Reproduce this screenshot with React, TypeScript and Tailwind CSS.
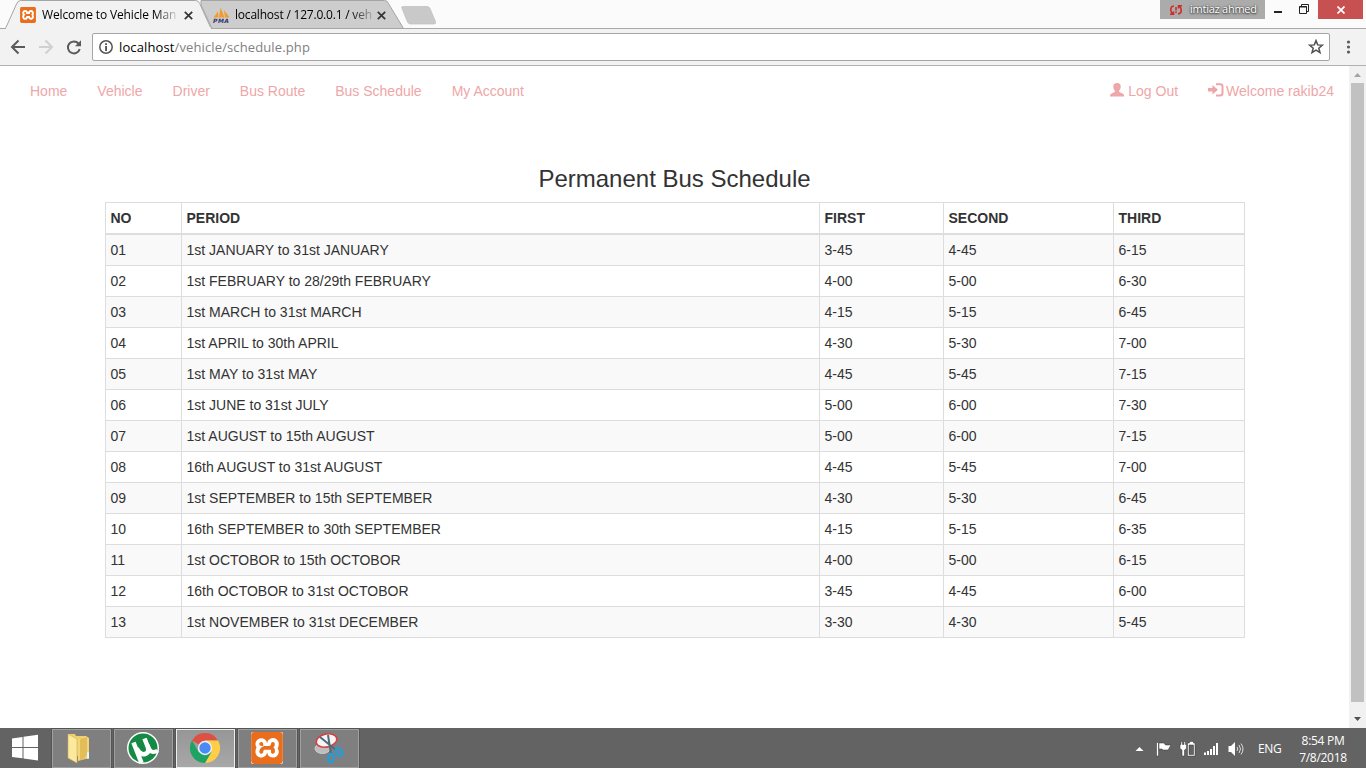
import React from "react";
import { SiXampp } from "react-icons/si";

const rows: string[][] = [
  ["01", "1st JANUARY to 31st JANUARY", "3-45", "4-45", "6-15"],
  ["02", "1st FEBRUARY to 28/29th FEBRUARY", "4-00", "5-00", "6-30"],
  ["03", "1st MARCH to 31st MARCH", "4-15", "5-15", "6-45"],
  ["04", "1st APRIL to 30th APRIL", "4-30", "5-30", "7-00"],
  ["05", "1st MAY to 31st MAY", "4-45", "5-45", "7-15"],
  ["06", "1st JUNE to 31st JULY", "5-00", "6-00", "7-30"],
  ["07", "1st AUGUST to 15th AUGUST", "5-00", "6-00", "7-15"],
  ["08", "16th AUGUST to 31st AUGUST", "4-45", "5-45", "7-00"],
  ["09", "1st SEPTEMBER to 15th SEPTEMBER", "4-30", "5-30", "6-45"],
  ["10", "16th SEPTEMBER to 30th SEPTEMBER", "4-15", "5-15", "6-35"],
  ["11", "1st OCTOBOR to 15th OCTOBOR", "4-00", "5-00", "6-15"],
  ["12", "16th OCTOBOR to 31st OCTOBOR", "3-45", "4-45", "6-00"],
  ["13", "1st NOVEMBER to 31st DECEMBER", "3-30", "4-30", "5-45"],
];

function XamppIcon({ className }: { className: string }) {
  return (
    <span className={"flex shrink-0 rounded-[2px] bg-white " + className}>
      <SiXampp className="size-full text-[#ea6d1c]" />
    </span>
  );
}

function TabClose() {
  return (
    <svg viewBox="0 0 9 9" className="size-[9px] shrink-0" stroke="#333" strokeWidth="1.700">
      <path d="M.8.8l7.400 7.400M8.200.8L.8 8.200" />
    </svg>
  );
}

function TabStrip() {
  return (
    <div className="relative flex h-7 bg-[#fbfbfb] font-['Open_Sans',sans-serif] text-[12px] text-black">
      <svg className="absolute top-0 left-0 h-[29px] w-[450px]" viewBox="0 0 450 29">
        <path d="M0 28.500H450" stroke="#a9a9a9" />
        <path d="M201 .5H384.500q3 0 4 3L403.500 28.500H212L201 5z" fill="#cdcdcd" stroke="#a5a5a5" />
        <path d="M402 8.500q-1-2 1-2h24q2 0 3 2l5.500 13q1 2.500-2 2.500h-23q-2 0-3-2z" fill="#c9c9c9" stroke="#bdbdbd" strokeWidth=".7" />
        <path d="M0 28.500H5.500L16.500 4q1.500-3.500 4-3.500H195.500q3 0 4.200 3L211 28.500" fill="#f2f2f2" stroke="#a5a5a5" />
        <path d="M6 28.500H211" stroke="#f2f2f2" strokeWidth="2" />
      </svg>
      <div className="relative flex w-[205px] items-center pt-[2px] pl-5">
        <XamppIcon className="size-4" />
        <div className="ml-[6px] w-[135px] overflow-hidden tracking-[-0.13px] whitespace-nowrap [mask-image:linear-gradient(to_right,black_84%,transparent_102%)]">Welcome to Vehicle Man</div>
        <div className="ml-[7px] flex"><TabClose /></div>
      </div>
      <div className="relative flex w-[200px] items-center pt-[2px] pl-2">
        <svg viewBox="0 0 17 17" className="h-[17px] w-[17px] shrink-0">
          <path d="M.5 10.500L5 4.500l.5 6zM6 10.500L7.500.5l4 10zM12 10.500L11 3l5.500 7.500z" fill="#f39b28" />
          <text x="0" y="16" fontSize="6" fontWeight="bold" fontStyle="italic" fill="#34346b" textLength="16" fontFamily="DejaVu Sans">PMA</text>
        </svg>
        <div className="ml-[5px] w-[137px] overflow-hidden tracking-[-0.2px] whitespace-nowrap [mask-image:linear-gradient(to_right,black_84%,transparent_104%)]">localhost / 127.0.0.1 / veh</div>
        <div className="ml-[5px] flex"><TabClose /></div>
      </div>
      <div className="relative ml-auto flex h-[19px]">
        <div className="flex h-[19px] w-[105px] items-center bg-[#ababab] pl-[9px] font-['Open_Sans',sans-serif] text-[11px] whitespace-nowrap text-white">
          <svg viewBox="0 0 14 12" className="mr-[7px] h-3 w-[14px] shrink-0" fill="none" stroke="#cf2d28" strokeWidth="1.600">
            <path d="M5 2Q1.500 2.500 1.800 6q.2 2.500 2 3.800M1 10.200h3.500V7.500M9 10Q12.500 9.500 12.200 6q-.2-2.500-2-3.800M13 1.800H9.500V4.500M7 3v3.500M7 7.500v1.500" />
          </svg>
          <span className="tracking-[-0.25px] [text-shadow:0_0_2px_#333,0_1px_2px_#333]">imtiaz ahmed</span>
        </div>
        <svg viewBox="0 0 53 19" className="h-[19px] w-[53px]" fill="none" stroke="#222">
          <path d="M9 12h8" strokeWidth="2" />
          <path d="M34.500 6.500h7v7h-7zM34 7h8M36.500 6V4.500h7v7H42" />
        </svg>
        <div className="mr-[3px] flex h-[19px] w-[45px] items-center justify-center bg-[#c75050]">
          <svg viewBox="0 0 8 8" className="size-2" stroke="#fff" strokeWidth="1.700"><path d="M.5.5l7 7m0-7l-7 7" /></svg>
        </div>
      </div>
    </div>
  );
}

function Toolbar() {
  return (
    <div className="flex h-[38px] items-center border-t border-b border-t-[#a9a9a9] border-b-[#b1b1b1] bg-[#f2f2f2]">
      <svg viewBox="0 0 92 36" className="h-9 w-[92px] shrink-0" fill="none" strokeWidth="2">
        <path d="M25 18H12.500M18.500 11.500L12 18l6.500 6.500" stroke="#5a5a5a" />
        <path d="M39 18H51.500M45.500 11.500L52 18l-6.500 6.500" stroke="#d0d0d0" />
        <path d="M78.500 14.500A6 6 0 1 0 79.700 20" stroke="#5a5a5a" />
        <path d="M81 11.200v6h-6z" fill="#5a5a5a" />
      </svg>
      <div className="flex h-7 w-[1238px] items-center rounded-[2px] border border-[#a5a5a5] bg-white pl-[6px]">
        <svg viewBox="0 0 14 14" className="size-[14px]"><circle cx="7" cy="7" r="6.200" fill="none" stroke="#555" strokeWidth="1.500" /><path d="M6.200 6h1.700v5H6.200zM6.200 3.200h1.700v1.700H6.200z" fill="#444" /></svg>
        <div className="ml-[6px] font-['Open_Sans',sans-serif] text-[13px] leading-6 tracking-[0.12px] text-[#808080]"><span className="text-black">localhost</span>/vehicle/schedule.php</div>
        <svg viewBox="0 0 16 16" className="mr-[5px] ml-auto size-4" fill="none" stroke="#505050" strokeWidth="1.500"><path d="M8 1.600l1.700 4.300 4.700.3-3.600 3 1.200 4.500L8 11.200l-4 2.500 1.200-4.500-3.600-3 4.700-.3z" /></svg>
      </div>
      <svg viewBox="0 0 36 36" className="h-9 w-9" fill="#5a5a5a"><circle cx="18.500" cy="13" r="1.600" /><circle cx="18.500" cy="18" r="1.600" /><circle cx="18.500" cy="23" r="1.600" /></svg>
    </div>
  );
}

function Page() {
  return (
    <main className="w-[1349px] font-['Liberation_Sans',sans-serif] text-[14px] leading-5 text-[#333]">
      <nav className="flex h-[50px] items-center pr-[15px] pl-[15px] text-[#eea6a8]">
        {["Home", "Vehicle", "Driver", "Bus Route", "Bus Schedule", "My Account"].map((t) => (
          <a key={t} className="px-[15px]">{t}</a>
        ))}
        <a className="ml-auto flex items-center px-[15px]">
          <svg viewBox="0 0 14 14" className="mr-1 mb-[2px] size-[14px]" fill="#eea6a8"><path d="M7 0C9.800 0 10.900 1.600 10.700 4c-.1 1.700-.8 3-1.600 3.700v1.100c.5.8 4.100 1.500 4.700 2.700.3.500.3 1.500.3 2H0c0-.5 0-1.500.3-2 .6-1.200 4.100-1.900 4.600-2.700V7.700C4.100 7 3.400 5.700 3.300 4 3.100 1.600 4.200 0 7 0z" /></svg>
          Log Out
        </a>
        <a className="flex items-center pl-[15px]">
          <svg viewBox="0 0 16 14" className="mr-[2px] mb-[2px] h-[14px] w-4" fill="#eea6a8"><path d="M0 5h4.500V2L10 6.800 4.500 11.500v-3H0z" /><path d="M8 1.300h4q2.500 0 2.500 2.200v6.800q0 2.200-2.500 2.200H8" fill="none" stroke="#eea6a8" strokeWidth="2" /></svg>
          Welcome rakib24
        </a>
      </nav>
      <h3 className="mt-[50px] text-center text-[24px] leading-[26px]">Permanent Bus Schedule</h3>
      <table className="mx-auto mt-[10px] w-[1140px] table-fixed border-collapse border border-[#ddd]">
        <colgroup><col className="w-[76px]" /><col className="w-[638px]" /><col className="w-[124px]" /><col className="w-[170px]" /><col /></colgroup>
        <thead>
          <tr>{["NO", "PERIOD", "FIRST", "SECOND", "THIRD"].map((h) => <th key={h} className="border border-b-2 border-[#ddd] p-[5px] text-left font-bold">{h}</th>)}</tr>
        </thead>
        <tbody>
          {rows.map((r) => (
            <tr key={r[0]} className="odd:bg-[#f9f9f9]">{r.map((c, i) => <td key={i} className="border border-[#ddd] p-[5px]">{c}</td>)}</tr>
          ))}
        </tbody>
      </table>
    </main>
  );
}

function Scrollbar() {
  return (
    <div className="flex w-[17px] flex-col items-center bg-[#f1f1f1]">
      <svg viewBox="0 0 17 17" className="size-[17px]"><path d="M5 11l3.500-4 3.500 4z" fill="#a3a3a3" /></svg>
      <div className="w-[13px] flex-1 bg-[#c1c1c1]" />
      <svg viewBox="0 0 17 26" className="h-[26px] w-[17px]"><path d="M5 15h7l-3.500 4z" fill="#505050" /></svg>
    </div>
  );
}

function ChromeIcon() {
  return (
    <svg viewBox="0 0 30 30" className="size-[30px]">
      <path d="M15 15L2 7.500A15 15 0 0 1 28 7.500H15z" fill="#dd5144" />
      <path d="M15 7.500h13A15 15 0 0 1 15 30l6.500-11.250z" fill="#ffcd46" />
      <path d="M2 7.500A15 15 0 0 0 15 30l6.500-11.250H8.500z" fill="#1da362" />
      <circle cx="15" cy="15" r="7.200" fill="#f1f1f1" />
      <circle cx="15" cy="15" r="5.700" fill="#4a8af4" />
    </svg>
  );
}

function Task({ active = false, children }: { active?: boolean; children: React.ReactNode }) {
  return (
    <div className={"flex h-[39px] w-[59px] items-center justify-center border pr-[2px] pb-px shadow-[0_0_0_1px_#555] " + (active ? "border-[#ededed] bg-linear-to-b from-[#969696] to-[#a8a8a8]" : "border-[#a0a0a0] bg-[#7f7f7f]")}>
      {children}
    </div>
  );
}

function Taskbar() {
  return (
    <footer className="flex h-10 bg-[#636363] text-white">
      <svg viewBox="0 0 52 40" className="h-10 w-[52px]" fill="#fff"><path d="M12 10.400l10.500-1.500V19H12zM23.500 8.700L38 6.800V19H23.500zM12 20h10.500v10.300L12 28.900zM23.500 20H38v12.600l-14.500-2z" /></svg>
      <div className="mt-px flex gap-[3px]">
        <Task>
          <svg viewBox="0 0 26 32" className="mr-[6px] h-8 w-[26px]">
            <path d="M3 2h7l1 2h10v20H3z" fill="#eecf72" />
            <path d="M3 2l9 5v24l-9-5z" fill="#fbe99e" stroke="#d5b04d" strokeWidth=".6" />
            <path d="M13 7l8-3 3 2v20l-11 3z" fill="#f3d67b" />
            <path d="M15 7l7-2v18l-4 5h-3z" fill="#e3bd57" />
            <rect x="22" y="20" width="2" height="7" rx="1" fill="#e8f6ff" />
          </svg>
        </Task>
        <Task>
          <svg viewBox="0 0 32 32" className="size-8">
            <circle cx="16" cy="16" r="16" fill="#fff" />
            <circle cx="16" cy="16" r="14.500" fill="#158a45" />
            <g fill="none" stroke="#fff" strokeWidth="4.600"><path d="M6.500 10.500L14.500 31" /><path d="M9.500 16.500q4 7 8.500 5.500t3-6.500L17.500 6.500" /><path d="M20.500 13q2.500 7 5.500 7t4.500-1.500" strokeWidth="4" /></g>
          </svg>
        </Task>
        <Task active><ChromeIcon /></Task>
        <Task><XamppIcon className="size-8" /></Task>
        <Task>
          <svg viewBox="0 0 30 32" className="h-8 w-[30px]">
            <ellipse cx="8.500" cy="16.500" rx="7.500" ry="5" fill="#bdbdbd" stroke="#d0d0d0" />
            <ellipse cx="12.500" cy="8.500" rx="10.500" ry="6.500" fill="#f5f5f5" stroke="#d54242" strokeWidth="1.600" transform="rotate(-12 12.500 8.500)" />
            <path d="M6 5l16 13M14 3l3 19" stroke="#526b79" strokeWidth="2" />
            <g fill="none" stroke="#299bd4" strokeWidth="2.600"><ellipse cx="17" cy="26" rx="2.700" ry="4" transform="rotate(15 17 26)" /><ellipse cx="25" cy="20" rx="2.700" ry="4.200" transform="rotate(-30 25 20)" /></g>
          </svg>
        </Task>
      </div>
      <svg viewBox="0 0 120 40" className="ml-auto h-10 w-[120px]" fill="#fff">
        <path d="M8.500 23l4-4 4 4z" />
        <path d="M29.500 14.500h2V28h-2zM32 15h5l1.500 2H44l-3 5h-5l-1-1h-3z" stroke="#333" strokeWidth=".5" />
        <path d="M54 13.500h1.500v3H57v-3h1.500v3h1v4l-2 1.500v6H55v-6l-2-1.500v-4h1zM60.500 15h2v-1.500h4V15h1.500v13h-7.500zM62 17v9.500h4.500V17z" fillRule="evenodd" stroke="#333" strokeWidth=".5" />
        <path d="M77 24.500h2V27h-2zm3-1.500h2v4h-2zm3-2h2v6h-2zm3-3h2v9h-2zm3-3h2v12h-2z" />
        <path d="M101.500 18h2.500l4-4v14l-4-4h-2.500z" />
        <path d="M110 19q1.500 2 0 4M112 17q3 4 0 8M114 15.500q4 5.500 0 11" fill="none" stroke="#ddd" />
      </svg>
      <div className="flex w-[38px] items-center pt-[1px] font-['Open_Sans',sans-serif] text-[12px] tracking-[-0.3px]"><span className="ml-[11px]">ENG</span></div>
      <div className="mr-[5px] flex w-[76px] flex-col pt-[4px] text-center font-['Open_Sans',sans-serif] text-[12px] leading-[17px] tracking-[-0.3px]"><span>8:54 PM</span><span>7/8/2018</span></div>
    </footer>
  );
}

export default function App() {
  return (
    <div className="flex h-[768px] w-[1366px] flex-col overflow-hidden bg-white">
      <TabStrip />
      <Toolbar />
      <div className="flex h-[662px]"><Page /><Scrollbar /></div>
      <Taskbar />
    </div>
  );
}
